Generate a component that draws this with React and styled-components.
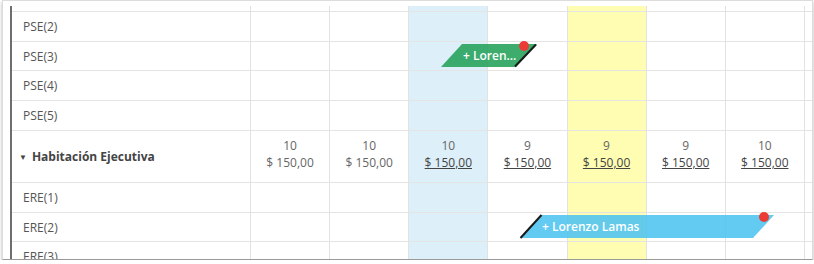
import * as React from "react";
import styled, { createGlobalStyle } from "styled-components";

const GlobalStyle = createGlobalStyle`
  html, body {
    margin: 0;
    padding: 0;
    background: #ffffff;
  }
  body {
    font-family: "Open Sans", "Liberation Sans", sans-serif;
  }
`;

const DAY_COLS = 7;
const HIGHLIGHT = { 2: "#ddeff8", 4: "#fefdb2" };

const rows = [
  { kind: "label", label: "", height: 6 },
  { kind: "label", label: "PSE(2)", height: 30 },
  { kind: "label", label: "PSE(3)", height: 29 },
  { kind: "label", label: "PSE(4)", height: 30 },
  { kind: "label", label: "PSE(5)", height: 30 },
  {
    kind: "group",
    label: "Habitación Ejecutiva",
    height: 52,
    values: [
      { qty: 10, price: "$ 150,00", link: false },
      { qty: 10, price: "$ 150,00", link: false },
      { qty: 10, price: "$ 150,00", link: true },
      { qty: 9, price: "$ 150,00", link: true },
      { qty: 9, price: "$ 150,00", link: true },
      { qty: 9, price: "$ 150,00", link: true },
      { qty: 10, price: "$ 150,00", link: true },
    ],
  },
  { kind: "label", label: "ERE(1)", height: 30 },
  { kind: "label", label: "ERE(2)", height: 29 },
  { kind: "label", label: "ERE(3)", height: 30 },
];

export default function App() {
  return (
    <>
      <GlobalStyle />
      <Frame>
        <Table>
          {rows.map((row, i) => (
            <Row key={i} $height={row.height} $first={i === 0}>
              {row.kind === "group" ? (
                <GroupLabel>
                  <Caret>▼</Caret>
                  {row.label}
                </GroupLabel>
              ) : (
                <Label>{row.label}</Label>
              )}
              {Array.from({ length: DAY_COLS }).map((_, c) => (
                <DayCell key={c} $bg={HIGHLIGHT[c]}>
                  {row.values && (
                    <Avail>
                      <Qty>{row.values[c].qty}</Qty>
                      <Price $link={row.values[c].link}>{row.values[c].price}</Price>
                    </Avail>
                  )}
                </DayCell>
              ))}
              <EndCell />
            </Row>
          ))}

          <Booking style={{ left: 429, top: 38, width: 96 }}>
            <BookingShape $color="rgba(40, 163, 92, 0.9)" $slant={21}>
              <BookingText>+ Loren...</BookingText>
            </BookingShape>
            <EdgeLine width="96" height="23" viewBox="0 0 96 23">
              <line x1="95" y1="0.5" x2="74" y2="22.5" stroke="#1a1a1a" strokeWidth="2" />
            </EdgeLine>
            <Dot style={{ left: 78 }} />
          </Booking>

          <Booking style={{ left: 508, top: 209, width: 254 }}>
            <BookingShape $color="rgba(82, 196, 240, 0.9)" $slant={21}>
              <BookingText>+ Lorenzo Lamas</BookingText>
            </BookingShape>
            <EdgeLine width="254" height="23" viewBox="0 0 254 23">
              <line x1="0.5" y1="23" x2="21.5" y2="0" stroke="#1a1a1a" strokeWidth="2" />
            </EdgeLine>
            <Dot style={{ left: 239 }} />
          </Booking>
        </Table>
      </Frame>
    </>
  );
}

const Frame = styled.div`
  box-sizing: border-box;
  margin-left: 2px;
  width: 811px;
  height: 260px;
  border: 1px solid #dcdcdc;
  border-bottom-color: #9a9a9a;
  box-shadow: 0 2px 3px rgba(0, 0, 0, 0.3);
  padding: 5px 0 0 7px;
  overflow: hidden;
  background: #ffffff;
`;

const Table = styled.div`
  position: relative;
  display: flex;
  flex-direction: column;
  border-left: 2px solid #6e6e6e;
  height: 100%;
`;

const Row = styled.div`
  box-sizing: border-box;
  display: grid;
  grid-template-columns: 238px repeat(7, 79.14px) 3px;
  height: ${(p) => p.$height}px;
  flex-shrink: 0;
  border-bottom: 1px solid #e4e4e4;
`;

const Label = styled.div`
  display: flex;
  align-items: center;
  padding-left: 11px;
  font-size: 12px;
  color: #555555;
`;

const GroupLabel = styled.div`
  display: flex;
  align-items: center;
  padding-left: 7px;
  font-size: 12px;
  font-weight: 700;
  color: #444444;
`;

const Caret = styled.span`
  font-size: 8px;
  margin-right: 5px;
  color: #444444;
`;

const DayCell = styled.div`
  border-left: 1px solid #e2e2e2;
  background: ${(p) => p.$bg || "transparent"};
  display: flex;
  justify-content: center;
  align-items: center;
`;

const EndCell = styled.div`
  border-left: 1px solid #e2e2e2;
`;

const Avail = styled.div`
  display: flex;
  flex-direction: column;
  align-items: center;
  padding-bottom: 6px;
  font-size: 12px;
  line-height: 17px;
  color: #666666;
`;

const Qty = styled.span``;

const Price = styled.span`
  color: ${(p) => (p.$link ? "#444444" : "#666666")};
  text-decoration: ${(p) => (p.$link ? "underline" : "none")};
`;

const Booking = styled.div`
  position: absolute;
  height: 23px;
`;

const BookingShape = styled.div`
  height: 100%;
  background: ${(p) => p.$color};
  clip-path: polygon(
    ${(p) => p.$slant}px 0,
    100% 0,
    calc(100% - ${(p) => p.$slant}px) 100%,
    0 100%
  );
  display: flex;
  align-items: center;
  padding-left: ${(p) => p.$slant + 1}px;
`;

const BookingText = styled.span`
  color: #ffffff;
  font-size: 12px;
  font-weight: 600;
  white-space: nowrap;
`;

const EdgeLine = styled.svg`
  position: absolute;
  left: 0;
  top: 0;
  overflow: visible;
`;

const Dot = styled.span`
  position: absolute;
  top: -3px;
  width: 10px;
  height: 10px;
  border-radius: 50%;
  background: #ea3c35;
`;
